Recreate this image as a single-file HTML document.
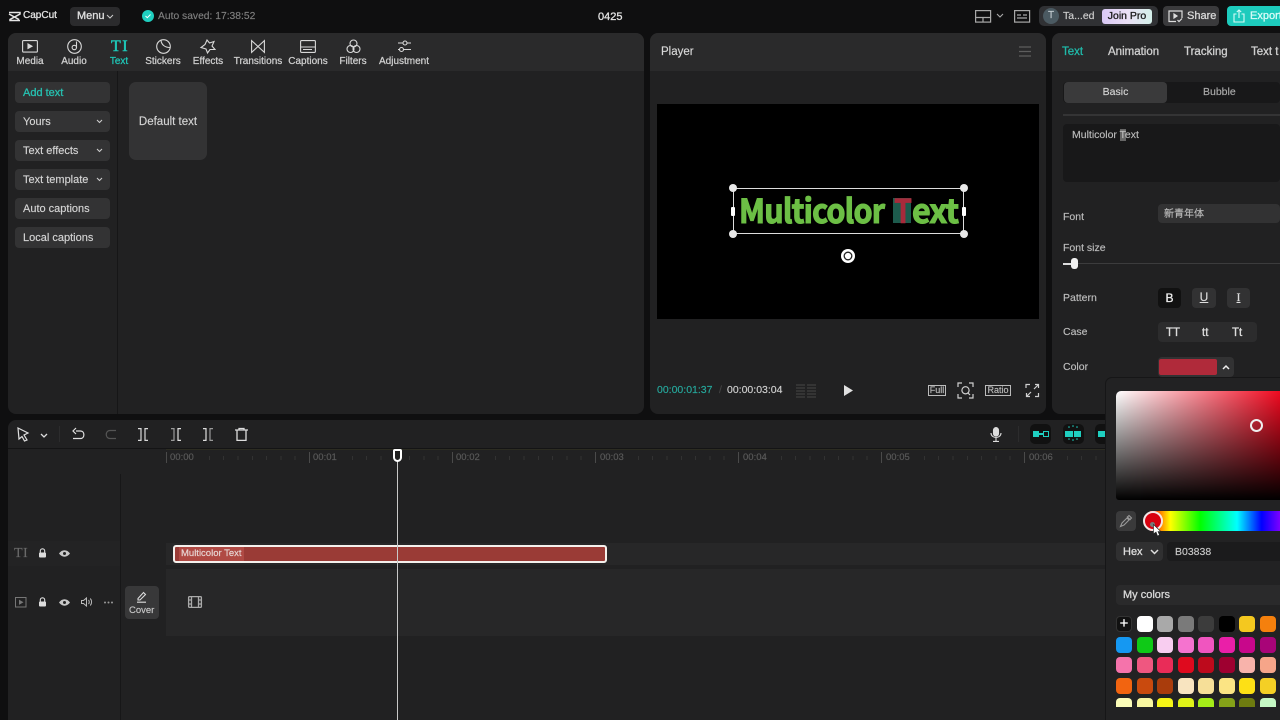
<!DOCTYPE html>
<html><head><meta charset="utf-8"><style>
*{box-sizing:border-box;margin:0;padding:0}
html,body{width:1280px;height:720px;overflow:hidden;background:#0f0f10}
#w{position:absolute;left:0;top:0;width:1280px;height:720px;overflow:hidden;background:#0f0f10;font-family:"Liberation Sans","Noto Sans CJK SC",sans-serif;color:#ddd;filter:blur(.3px);-webkit-text-stroke:.15px currentColor}
.a{position:absolute}
.t{position:absolute;white-space:nowrap;font-size:11px;line-height:14px;color:#d8d8d8}
.panel{position:absolute;background:#212122;border-radius:8px;overflow:hidden}
.tab{position:absolute;top:56px;width:80px;text-align:center;font-size:10px;line-height:12px;color:#cfcfcf;white-space:nowrap;-webkit-text-stroke:.25px currentColor}
.btn{position:absolute;left:15px;width:95px;height:21px;background:#333334;border-radius:4px;font-size:11px;line-height:21px;padding:1px 0 0 8px;color:#d4d4d4}
.m{-webkit-text-stroke:.3px currentColor}
.h{position:absolute;white-space:nowrap;top:189px;font:bold 33px/40px 'Noto Sans CJK SC','Liberation Sans',sans-serif;letter-spacing:-.9px;transform-origin:0 0}
svg{position:absolute;overflow:visible}
.sw{position:absolute;width:16px;height:16px;border-radius:4px}
</style></head><body><div id="w">

<!-- top bar -->
<svg style="left:8px;top:11px" width="13" height="11" viewBox="0 0 13 11" fill="none" stroke="#e5e5e5" stroke-width="1.500"><path d="M1 1.500H12V3L2 8.500V9.500H12M1 3L11 8.500"/></svg>
<div class="t m" style="left:23px;top:9px;font-size:10px;color:#e2e2e2">CapCut</div>
<div class="a" style="left:70px;top:7px;width:50px;height:19px;background:#2b2b2d;border-radius:4px"></div>
<div class="t m" style="left:77px;top:9px;font-size:11px;color:#e0e0e0">Menu</div>
<svg style="left:106px;top:14px" width="8" height="5" fill="none" stroke="#ccc" stroke-width="1"><path d="M1 1L4 4L7 1"/></svg>
<svg style="left:142px;top:10px" width="12" height="12"><circle cx="6" cy="6" r="6" fill="#1fcfc0"/><path d="M3.500 6L5.300 7.700L8.500 4.500" stroke="#fff" fill="none"/></svg>
<div class="t" style="left:158px;top:10px;font-size:10.300px;color:#7f7f7f">Auto saved: 17:38:52</div>
<div class="t m" style="left:598px;top:10px;font-size:11px;color:#e2e2e2">0425</div>
<svg style="left:975px;top:10px" width="17" height="13" fill="none" stroke="#a8a8a8" stroke-width="1.200"><rect x=".6" y=".6" width="15" height="11.500"/><path d="M.6 7.500H15.600M8 7.500V12"/></svg>
<svg style="left:996px;top:13px" width="8" height="5" fill="none" stroke="#aaa" stroke-width="1.100"><path d="M1 1L4 4L7 1"/></svg>
<svg style="left:1014px;top:10px" width="16" height="13" fill="none" stroke="#a8a8a8" stroke-width="1.200"><rect x=".6" y=".6" width="15" height="11.500"/><path d="M3 5H7M9 5H13M3 8H13"/></svg>
<div class="a" style="left:1039px;top:6px;width:119px;height:20px;background:#303134;border-radius:5px"></div>
<div class="a" style="left:1043px;top:8px;width:16px;height:16px;background:#4b5a62;border-radius:50%;font-size:10px;line-height:16px;text-align:center;color:#c8d0d4">T</div>
<div class="t" style="left:1063px;top:9px;font-size:10.500px;color:#cfcfcf">Ta...ed</div>
<div class="a m" style="left:1102px;top:9px;width:50px;height:15px;border-radius:3px;background:linear-gradient(90deg,#d9c8f5,#eadff5,#d5f0ea);font-size:10.500px;line-height:15px;text-align:center;color:#1a1a1a">Join Pro</div>
<div class="a" style="left:1163px;top:6px;width:56px;height:20px;background:#3a3a3c;border-radius:4px"></div>
<svg style="left:1168px;top:10px" width="15" height="13" fill="none" stroke="#ddd" stroke-width="1.200"><path d="M8 11.500H1V1H14V8"/><path d="M6 4L9 6L6 8Z" fill="#ddd"/><path d="M9.500 10L11 11.500L14 8.500"/></svg>
<div class="t m" style="left:1187px;top:9px;font-size:11px;color:#d8d8d8">Share</div>
<div class="a" style="left:1227px;top:6px;width:60px;height:20px;background:#1dcbbd;border-radius:4px"></div>
<svg style="left:1233px;top:9px" width="12" height="14" fill="none" stroke="#d8fbf7" stroke-width="1.100"><path d="M3.500 5H1V13H11V5H8.500M6 9V1M3.800 3L6 1L8.200 3"/></svg>
<div class="t m" style="left:1250px;top:9px;font-size:11px;color:#d8fbf7">Export</div>

<!-- left panel -->
<div class="panel" style="left:8px;top:33px;width:636px;height:381px;">
  <div class="a" style="left:0;top:0;width:636px;height:38px;background:#2a2a2b"></div>
  <div class="a" style="left:109px;top:38px;width:1px;height:343px;background:#161617"></div>
</div>
<svg style="left:22px;top:40px" width="16" height="13" fill="none" stroke="#d8d8d8" stroke-width="1.100"><rect x=".6" y=".6" width="14.800" height="11.500" rx="1"/><path d="M6 4L10 6.300L6 8.500Z" fill="#d8d8d8"/></svg>
<svg style="left:67px;top:39px" width="15" height="15" fill="none" stroke="#d8d8d8" stroke-width="1.100"><circle cx="7.500" cy="7.500" r="6.800"/><circle cx="7.300" cy="8.500" r="2.200"/><path d="M9.500 8.500V2.500"/></svg>
<div class="t" style="left:111px;top:38px;font:16px/17px 'Liberation Serif',serif;color:#1fc8b8;letter-spacing:1.500px;-webkit-text-stroke:.5px #1fc8b8">TI</div>
<svg style="left:156px;top:39px" width="15" height="15" fill="none" stroke="#d8d8d8" stroke-width="1.100"><circle cx="7.500" cy="7.500" r="6.800"/><path d="M5 1.500C5.500 5.500 8.500 8.500 14 8.500"/></svg>
<svg style="left:200px;top:39px" width="16" height="15" fill="none" stroke="#d8d8d8" stroke-width="1.100"><path d="M7 1L9.500 4L14 2.500L12 7L15 10.500L10 10.500L7.500 14L6 10L1 8.500L5 5.500Z"/></svg>
<svg style="left:251px;top:40px" width="14" height="13" fill="none" stroke="#d8d8d8" stroke-width="1.100"><path d="M.6 .6L7 6.500L13.400 .6V12.400L7 6.500L.6 12.400Z"/></svg>
<svg style="left:300px;top:40px" width="16" height="13" fill="none" stroke="#d8d8d8" stroke-width="1.100"><rect x=".6" y=".6" width="14.800" height="11.800" rx="1"/><path d="M.6 7H15.400M3 9.500H12" /></svg>
<svg style="left:346px;top:39px" width="15" height="15" fill="none" stroke="#d8d8d8" stroke-width="1.100"><circle cx="7.500" cy="4.500" r="3.500"/><circle cx="4.500" cy="10" r="3.500"/><circle cx="10.500" cy="10" r="3.500"/></svg>
<svg style="left:397px;top:39px" width="15" height="14" fill="none" stroke="#d8d8d8" stroke-width="1.100"><path d="M1 4H6M10 4H14M1 10.500H2.500M6.500 10.500H14"/><circle cx="8" cy="4" r="2"/><circle cx="4.500" cy="10.500" r="2"/></svg>
<div class="tab" style="left:-10px">Media</div>
<div class="tab" style="left:34px">Audio</div>
<div class="tab" style="left:79px;color:#1fc8b8">Text</div>
<div class="tab" style="left:123px">Stickers</div>
<div class="tab" style="left:168px">Effects</div>
<div class="tab" style="left:218px">Transitions</div>
<div class="tab" style="left:268px">Captions</div>
<div class="tab" style="left:313px">Filters</div>
<div class="tab" style="left:364px">Adjustment</div>

<div class="btn m" style="top:82px;color:#26c0b0">Add text</div>
<div class="btn" style="top:111px">Yours</div>
<div class="btn" style="top:140px">Text effects</div>
<div class="btn" style="top:169px">Text template</div>
<div class="btn" style="top:198px">Auto captions</div>
<div class="btn" style="top:227px">Local captions</div>
<svg style="left:96px;top:119px" width="7" height="5" fill="none" stroke="#ccc" stroke-width="1.100"><path d="M1 1L3.500 3.500L6 1"/></svg>
<svg style="left:96px;top:148px" width="7" height="5" fill="none" stroke="#ccc" stroke-width="1.100"><path d="M1 1L3.500 3.500L6 1"/></svg>
<svg style="left:96px;top:177px" width="7" height="5" fill="none" stroke="#ccc" stroke-width="1.100"><path d="M1 1L3.500 3.500L6 1"/></svg>
<div class="a" style="left:129px;top:82px;width:78px;height:78px;background:#333334;border-radius:7px;font-size:11.500px;line-height:78px;padding-top:1px;text-align:center;color:#d4d4d4">Default text</div>

<!-- player -->
<div class="panel" style="left:650px;top:33px;width:396px;height:381px;">
  <div class="a" style="left:0;top:0;width:396px;height:38px;background:#2a2a2b"></div>
</div>
<div class="t" style="left:661px;top:45px;font-size:11.500px;color:#d8d8d8">Player</div>
<svg style="left:1019px;top:46px" width="12" height="11" stroke="#5e5e5e" stroke-width="1.200"><path d="M0 1H12M0 5.500H12M0 10H12"/></svg>
<div class="a" style="left:657px;top:104px;width:382px;height:215px;background:#000"></div>
<div class="a" style="left:733px;top:188px;width:231px;height:46px;border:1px solid #ddd"></div>
<div class="a" style="left:893px;top:198px;width:18px;height:25px;background:#1d5b4d"></div>
<div class="h" style="left:739px;color:#6cbf45;transform:scaleX(.925);-webkit-text-stroke:1.100px #6cbf45">Multicolor</div>
<div class="h" style="left:894px;color:#a82a3b;transform:scaleX(.88);-webkit-text-stroke:.5px #a82a3b">T</div>
<div class="h" style="left:912px;color:#6cbf45;transform:scaleX(.975);-webkit-text-stroke:1.100px #6cbf45">ext</div>
<div class="a" style="left:729px;top:184px;width:8px;height:8px;background:#e8e8e8;border-radius:50%"></div>
<div class="a" style="left:960px;top:184px;width:8px;height:8px;background:#e8e8e8;border-radius:50%"></div>
<div class="a" style="left:729px;top:230px;width:8px;height:8px;background:#e8e8e8;border-radius:50%"></div>
<div class="a" style="left:960px;top:230px;width:8px;height:8px;background:#e8e8e8;border-radius:50%"></div>
<div class="a" style="left:731px;top:207px;width:4px;height:9px;background:#fff;border-radius:1px"></div>
<div class="a" style="left:962px;top:207px;width:4px;height:9px;background:#fff;border-radius:1px"></div>
<svg style="left:841px;top:249px" width="14" height="14"><circle cx="7" cy="7" r="7" fill="#fff"/><circle cx="7" cy="7" r="3.800" fill="none" stroke="#222" stroke-width="1.300"/><circle cx="7" cy="7" r="1.800" fill="#fff"/></svg>
<div class="t" style="left:657px;top:383px;font-size:10.500px;color:#26a89c">00:00:01:37</div>
<div class="t" style="left:719px;top:383px;font-size:10.500px;color:#444">/</div>
<div class="t" style="left:727px;top:383px;font-size:10.500px;color:#cfcfcf">00:00:03:04</div>
<svg style="left:796px;top:384px" width="20" height="14" stroke="#3a3a3a" stroke-width="1.500"><path d="M0 1H9M11 1H20M0 4H9M11 4H20M0 7H9M11 7H20M0 10H9M11 10H20M0 13H9M11 13H20"/></svg>
<svg style="left:844px;top:385px" width="9" height="11"><path d="M0 0L9 5.500L0 11Z" fill="#e0e0e0"/></svg>
<div class="a" style="left:928px;top:385px;width:18px;height:11px;border:1px solid #bbb;font-size:9px;line-height:9px;text-align:center;color:#bbb">Full</div>
<svg style="left:958px;top:383px" width="15" height="15" fill="none" stroke="#d0d0d0" stroke-width="1.200"><path d="M0 4V0H4M11 0H15V4M15 11V15H11M4 15H0V11"/><circle cx="7.500" cy="7.300" r="3.600"/><path d="M10 10L12 12"/></svg>
<div class="a" style="left:985px;top:385px;width:26px;height:11px;border:1px solid #bbb;font-size:9px;line-height:9px;text-align:center;color:#bbb">Ratio</div>
<svg style="left:1026px;top:384px" width="13" height="13" fill="none" stroke="#d0d0d0" stroke-width="1.200"><path d="M0 4V0.500H4M9 0.500H12.500V4M12.500 9V12.500H9M4 12.500H0.500V9M12 1L8 5M1 12L5 8"/></svg>

<!-- right panel -->
<div class="panel" style="left:1052px;top:33px;width:240px;height:381px;">
  <div class="a" style="left:0;top:0;width:240px;height:38px;background:#2a2a2b"></div>
</div>
<div class="t m" style="left:1062px;top:45px;font-size:11.500px;color:#20b8a8">Text</div>
<div class="t m" style="left:1108px;top:45px;font-size:11.500px;color:#cfcfcf">Animation</div>
<div class="t m" style="left:1184px;top:45px;font-size:11.500px;color:#cfcfcf">Tracking</div>
<div class="t m" style="left:1251px;top:45px;font-size:11.500px;color:#cfcfcf">Text t</div>
<div class="a" style="left:1063px;top:82px;width:217px;height:21px;background:#181819;border-radius:4px"></div>
<div class="a" style="left:1064px;top:82px;width:103px;height:21px;background:#3a3a3b;border-radius:4px;font-size:10.500px;line-height:20px;text-align:center;color:#d4d4d4">Basic</div>
<div class="t" style="left:1203px;top:85px;font-size:10.500px;color:#aaa">Bubble</div>
<div class="a" style="left:1063px;top:114px;width:217px;height:2px;background:#343435"></div>
<div class="a" style="left:1063px;top:124px;width:217px;height:58px;background:#181819;border-radius:4px"></div>
<div class="a" style="left:1120px;top:129px;width:6px;height:12px;background:#666"></div>
<div class="t" style="left:1072px;top:128px;font-size:10.500px;color:#bcbcbc">Multicolor Text</div>
<div class="t" style="left:1063px;top:210px;font-size:10.500px;color:#bdbdbd">Font</div>
<div class="a" style="left:1158px;top:204px;width:122px;height:19px;background:#323233;border-radius:4px"></div>
<div class="t" style="left:1164px;top:208px;font-size:10px;color:#bbb">新青年体</div>
<div class="t" style="left:1063px;top:241px;font-size:10.500px;color:#bdbdbd">Font size</div>
<div class="a" style="left:1063px;top:263px;width:217px;height:1px;background:#3c3c3d"></div>
<div class="a" style="left:1063px;top:263px;width:10px;height:2px;background:#ddd"></div>
<div class="a" style="left:1071px;top:258px;width:7px;height:11px;background:#f0f0f0;border-radius:3px"></div>
<div class="t" style="left:1063px;top:291px;font-size:10.500px;color:#bdbdbd">Pattern</div>
<div class="a m" style="left:1158px;top:288px;width:23px;height:20px;background:#111;border-radius:4px;font-size:12px;line-height:20px;text-align:center;color:#eee">B</div>
<div class="a" style="left:1192px;top:288px;width:24px;height:20px;background:#323233;border-radius:4px;font-size:12px;line-height:19px;text-align:center;color:#ddd;text-decoration:underline">U</div>
<div class="a" style="left:1227px;top:288px;width:23px;height:20px;background:#323233;border-radius:4px;font:12px/19px 'Liberation Serif',serif;text-align:center;color:#ddd;text-decoration:underline">I</div>
<div class="t" style="left:1063px;top:325px;font-size:10.500px;color:#bdbdbd">Case</div>
<div class="a" style="left:1158px;top:322px;width:99px;height:20px;background:#2c2c2d;border-radius:4px"></div>
<div class="t m" style="left:1166px;top:326px;font-size:11.500px;color:#ddd">TT</div>
<div class="t m" style="left:1202px;top:326px;font-size:11.500px;color:#ddd">tt</div>
<div class="t m" style="left:1232px;top:326px;font-size:11.500px;color:#ddd">Tt</div>
<div class="t" style="left:1063px;top:360px;font-size:10.500px;color:#bdbdbd">Color</div>
<div class="a" style="left:1158px;top:357px;width:76px;height:20px;background:#323233;border-radius:4px"></div>
<div class="a" style="left:1159px;top:359px;width:58px;height:16px;background:#b02a3a;border-radius:2px"></div>
<svg style="left:1222px;top:365px" width="8" height="5" fill="none" stroke="#eee" stroke-width="1.500"><path d="M1 4L4 1L7 4"/></svg>

<!-- timeline -->
<div class="a" style="left:8px;top:420px;width:1100px;height:300px;background:#212122;border-radius:8px 0 0 0"></div>
<div class="a" style="left:8px;top:448px;width:1100px;height:1px;background:#141415"></div>
<svg style="left:17px;top:427px" width="12" height="15" fill="none" stroke="#e0e0e0" stroke-width="1.200"><path d="M1 1L11 6L7 8L10 13L7.500 14L5 9.500L2 12Z"/></svg>
<svg style="left:40px;top:433px" width="8" height="5" fill="none" stroke="#ddd" stroke-width="1.300"><path d="M1 1L4 4L7 1"/></svg>
<div class="a" style="left:59px;top:426px;width:1px;height:16px;background:#2c2c2d"></div>
<svg style="left:72px;top:428px" width="13" height="12" fill="none" stroke="#e0e0e0" stroke-width="1.200"><path d="M4 3.500H8.500C13 3.500 13 11 8.500 11H1M4 .5L1 3.500L4 6.500" transform="translate(0,-.5)"/></svg>
<svg style="left:105px;top:428px" width="12" height="12" fill="none" stroke="#555" stroke-width="1.200"><path d="M11 2.500H5C0 2.500 0 10.500 5 10.500H11"/></svg>
<svg style="left:138px;top:428px" width="11" height="13" fill="none" stroke="#d8d8d8" stroke-width="1.200"><path d="M0 .6H3V12.400H0M10 .6H7V12.400H10"/></svg>
<svg style="left:171px;top:428px" width="11" height="13" fill="none" stroke="#999" stroke-width="1.200"><path d="M0 .6H3V12.400H0"/><path d="M10 .6H7V12.400H10" stroke="#ddd"/></svg>
<svg style="left:203px;top:428px" width="11" height="13" fill="none" stroke="#ddd" stroke-width="1.200"><path d="M0 .6H3V12.400H0"/><path d="M10 .6H7V12.400H10" stroke="#999"/></svg>
<svg style="left:235px;top:428px" width="13" height="13" fill="none" stroke="#ddd" stroke-width="1.300"><path d="M0 2H13M2 2V12.400H11V2M4 2V.5H9V2"/></svg>

<svg style="left:990px;top:427px" width="12" height="15" fill="none" stroke="#ddd" stroke-width="1.100"><rect x="3.500" y=".6" width="5" height="8.500" rx="2.500" fill="#ddd"/><path d="M1 6C1 12 11 12 11 6M6 11V14M3 14.400H9"/></svg>
<div class="a" style="left:1018px;top:426px;width:1px;height:16px;background:#2c2c2d"></div>
<div class="a" style="left:1030px;top:424px;width:21px;height:20px;background:#111;border-radius:5px"></div>
<div class="a" style="left:1033px;top:431px;width:6px;height:6px;background:#1fcfc0"></div>
<div class="a" style="left:1039px;top:433px;width:4px;height:2px;background:#1fcfc0"></div>
<div class="a" style="left:1043px;top:431px;width:6px;height:6px;border:1.500px solid #1fcfc0"></div>
<div class="a" style="left:1063px;top:424px;width:21px;height:20px;background:#111;border-radius:5px"></div>
<div class="a" style="left:1065px;top:431px;width:7.500px;height:6px;background:#1fcfc0"></div>
<div class="a" style="left:1073.500px;top:431px;width:7.500px;height:6px;background:#1fcfc0"></div>
<svg style="left:1065px;top:426px" width="17" height="16" fill="#1fcfc0"><circle cx="4" cy="1" r=".8"/><circle cx="8" cy="0" r=".8"/><circle cx="12" cy="1" r=".8"/><circle cx="4" cy="13" r=".8"/><circle cx="8" cy="14" r=".8"/><circle cx="12" cy="13" r=".8"/></svg>
<div class="a" style="left:1095px;top:424px;width:13px;height:20px;background:#111;border-radius:5px 0 0 5px"></div>
<div class="a" style="left:1098px;top:431px;width:8px;height:6px;background:#1fcfc0"></div>
<div class="a" style="left:1106px;top:420px;width:6px;height:300px;background:#171718"></div>

<!-- ruler -->
<div class="a" style="left:166px;top:449px;width:940px;height:1px;background:#2c2c22"></div>
<div class="a" style="left:166px;top:456px;width:940px;height:4px;background:repeating-linear-gradient(90deg,#323232 0,#323232 1px,transparent 1px,transparent 14.300px)"></div>
<div class="a" style="left:166px;top:452px;width:1px;height:11px;background:#4a4a4a"></div><div class="a" style="left:167px;top:451px;width:30px;height:13px;background:#212122"></div><div class="t" style="left:170px;top:451px;font-size:9.500px;color:#5a5a5a">00:00</div>
<div class="a" style="left:309px;top:452px;width:1px;height:11px;background:#4a4a4a"></div><div class="a" style="left:310px;top:451px;width:30px;height:13px;background:#212122"></div><div class="t" style="left:313px;top:451px;font-size:9.500px;color:#5a5a5a">00:01</div>
<div class="a" style="left:452px;top:452px;width:1px;height:11px;background:#4a4a4a"></div><div class="a" style="left:453px;top:451px;width:30px;height:13px;background:#212122"></div><div class="t" style="left:456px;top:451px;font-size:9.500px;color:#5a5a5a">00:02</div>
<div class="a" style="left:595px;top:452px;width:1px;height:11px;background:#4a4a4a"></div><div class="a" style="left:596px;top:451px;width:30px;height:13px;background:#212122"></div><div class="t" style="left:600px;top:451px;font-size:9.500px;color:#5a5a5a">00:03</div>
<div class="a" style="left:738px;top:452px;width:1px;height:11px;background:#4a4a4a"></div><div class="a" style="left:739px;top:451px;width:30px;height:13px;background:#212122"></div><div class="t" style="left:743px;top:451px;font-size:9.500px;color:#5a5a5a">00:04</div>
<div class="a" style="left:881px;top:452px;width:1px;height:11px;background:#4a4a4a"></div><div class="a" style="left:882px;top:451px;width:30px;height:13px;background:#212122"></div><div class="t" style="left:886px;top:451px;font-size:9.500px;color:#5a5a5a">00:05</div>
<div class="a" style="left:1024px;top:452px;width:1px;height:11px;background:#4a4a4a"></div><div class="a" style="left:1025px;top:451px;width:30px;height:13px;background:#212122"></div><div class="t" style="left:1029px;top:451px;font-size:9.500px;color:#5a5a5a">00:06</div>

<div class="a" style="left:120px;top:474px;width:1px;height:246px;background:#171718"></div>
<div class="a" style="left:166px;top:543px;width:940px;height:22px;background:#272728"></div>
<div class="a" style="left:166px;top:569px;width:940px;height:67px;background:#272728"></div>
<div class="a" style="left:8px;top:541px;width:112px;height:25px;background:#232324"></div>

<div class="t" style="left:14px;top:546px;font:14px/15px 'Liberation Serif',serif;color:#6a6a6a;letter-spacing:.5px">TI</div>
<svg style="left:38px;top:548px" width="9" height="10"><path d="M2.300 4.500V3A2.200 2.200 0 0 1 6.700 3V4.500" stroke="#ddd" stroke-width="1.100" fill="none"/><rect x="1" y="4.500" width="7" height="5" rx="1" fill="#ddd"/></svg>
<svg style="left:59px;top:550px" width="11" height="7"><path d="M0 3.500C3 -.8 8 -.8 11 3.500C8 7.800 3 7.800 0 3.500Z" fill="#c8c8c8"/><circle cx="5.500" cy="3.500" r="1.500" fill="#222"/></svg>
<svg style="left:15px;top:597px" width="12" height="11" fill="none" stroke="#777" stroke-width="1"><rect x=".5" y=".5" width="10.500" height="9.500"/><path d="M4.500 3.500L7.500 5.250L4.500 7Z" fill="#777"/></svg>
<svg style="left:38px;top:597px" width="9" height="10"><path d="M2.300 4.500V3A2.200 2.200 0 0 1 6.700 3V4.500" stroke="#ddd" stroke-width="1.100" fill="none"/><rect x="1" y="4.500" width="7" height="5" rx="1" fill="#ddd"/></svg>
<svg style="left:59px;top:599px" width="11" height="7"><path d="M0 3.500C3 -.8 8 -.8 11 3.500C8 7.800 3 7.800 0 3.500Z" fill="#c8c8c8"/><circle cx="5.500" cy="3.500" r="1.500" fill="#222"/></svg>
<svg style="left:81px;top:597px" width="11" height="10" fill="none" stroke="#bbb" stroke-width="1"><path d="M.5 3.500H2.500L5.500 1V9L2.500 6.500H.5ZM7.500 3C8.500 4 8.500 6 7.500 7M9.300 1.500C11 3.500 11 6.500 9.300 8.500"/></svg>
<svg style="left:104px;top:601px" width="9" height="3" fill="#999"><circle cx="1" cy="1.500" r="1"/><circle cx="4.500" cy="1.500" r="1"/><circle cx="8" cy="1.500" r="1"/></svg>
<div class="a" style="left:125px;top:586px;width:34px;height:33px;background:#383839;border-radius:4px"></div>
<svg style="left:136px;top:591px" width="11" height="12" fill="none" stroke="#ddd" stroke-width="1.100"><path d="M2 7.500L7.500 1.500L9.500 3.500L4 9H2ZM1 11.200H10"/></svg>
<div class="t" style="left:129px;top:604px;font-size:9.500px;color:#c8c8c8">Cover</div>
<svg style="left:188px;top:596px" width="14" height="12" fill="none" stroke="#aaa" stroke-width="1.300"><rect x=".6" y=".6" width="12.800" height="10.800" rx="1"/><path d="M3.500 .6V11.400M10.500 .6V11.400M.6 4H3.500M.6 8H3.500M10.500 4H13.400M10.500 8H13.400"/></svg>

<div class="a" style="left:173px;top:545px;width:434px;height:18px;background:#9a3b36;border:2px solid #f4f0ec;border-radius:3px"></div>
<div class="a" style="left:179px;top:547px;width:65px;height:14px;background:#b04a44"></div>
<div class="t" style="left:181px;top:547px;font-size:9.500px;color:#e8d8d6">Multicolor Text</div>

<div class="a" style="left:397px;top:456px;width:1px;height:264px;background:#c8c8c8"></div>
<div class="a" style="left:393px;top:449px;width:9px;height:13px;border:2px solid #fff;border-radius:2px 2px 5px 5px;background:#222"></div>

<!-- color picker -->
<div class="a" style="left:1106px;top:378px;width:180px;height:350px;background:#222223;border-radius:6px;box-shadow:0 0 0 1px #161617"></div>
<div class="a" style="left:1116px;top:391px;width:164px;height:109px;border-radius:5px 0 0 3px;background:linear-gradient(to bottom,transparent,#000),linear-gradient(to right,#fff,#f00a20)"></div>
<div class="a" style="left:1250px;top:419px;width:13px;height:13px;border:2px solid #eee;border-radius:50%"></div>
<div class="a" style="left:1116px;top:511px;width:20px;height:20px;background:#3a3a3b;border-radius:4px"></div>
<svg style="left:1119px;top:514px" width="14" height="14" fill="none" stroke="#999" stroke-width="1.100"><path d="M1.500 12.500L3 9L8 4L10 6L5 11ZM8 2.500L11.500 6M10 1.500L12.500 4L11 5.500L8.500 3Z"/></svg>
<div class="a" style="left:1150px;top:511px;width:136px;height:20px;background:linear-gradient(90deg,#f00 0%,#ff0 15%,#0f0 37%,#0ff 64%,#00f 82%,#8000ff 96%,#a0f 100%)"></div>
<div class="a" style="left:1143px;top:511px;width:20px;height:20px;background:#d8000f;border:2px solid #f3e6e6;border-radius:50%"></div>
<div class="a" style="left:1150px;top:522px;width:5px;height:5px;background:#777;border-radius:50%"></div>
<svg style="left:1153px;top:524px" width="8" height="13"><path d="M.5 .5V10L3 8L4.500 12L6.500 11L5 7.500H7.800Z" fill="#fff" stroke="#222" stroke-width=".6"/></svg>
<div class="a" style="left:1116px;top:542px;width:47px;height:19px;background:#303031;border-radius:4px"></div>
<div class="t m" style="left:1123px;top:545px;font-size:11px;color:#ddd">Hex</div>
<svg style="left:1150px;top:549px" width="9" height="6" fill="none" stroke="#ddd" stroke-width="1.500"><path d="M1 1L4.500 4.500L8 1"/></svg>
<div class="a" style="left:1167px;top:542px;width:119px;height:19px;background:#1b1b1c;border-radius:4px"></div>
<div class="t" style="left:1175px;top:545px;font-size:10.500px;color:#c8c8c8">B03838</div>
<div class="a" style="left:1116px;top:585px;width:170px;height:20px;background:#2a2a2b;border-radius:4px"></div>
<div class="t m" style="left:1123px;top:588px;font-size:11px;color:#d8d8d8">My colors</div>

<div class="sw" style="left:1116px;top:616px;background:#111;border:1px solid #333;color:#fff;font-size:15px;line-height:13px;text-align:center">+</div>
<div class="sw" style="left:1137px;top:616px;background:#fff"></div>
<div class="sw" style="left:1157px;top:616px;background:#a9a9a9"></div>
<div class="sw" style="left:1178px;top:616px;background:#7a7a7a"></div>
<div class="sw" style="left:1198px;top:616px;background:#3c3c3c"></div>
<div class="sw" style="left:1219px;top:616px;background:#000"></div>
<div class="sw" style="left:1239px;top:616px;background:#f4c81f"></div>
<div class="sw" style="left:1260px;top:616px;background:#f5800d"></div>

<div class="sw" style="left:1116px;top:637px;background:#1598f2"></div>
<div class="sw" style="left:1137px;top:637px;background:#0fc917"></div>
<div class="sw" style="left:1157px;top:637px;background:#f8cdf0"></div>
<div class="sw" style="left:1178px;top:637px;background:#f573cf"></div>
<div class="sw" style="left:1198px;top:637px;background:#f055bf"></div>
<div class="sw" style="left:1219px;top:637px;background:#ea1fa8"></div>
<div class="sw" style="left:1239px;top:637px;background:#c8078b"></div>
<div class="sw" style="left:1260px;top:637px;background:#a80478"></div>

<div class="sw" style="left:1116px;top:657px;background:#f573ab"></div>
<div class="sw" style="left:1137px;top:657px;background:#ef5780"></div>
<div class="sw" style="left:1157px;top:657px;background:#e92c58"></div>
<div class="sw" style="left:1178px;top:657px;background:#df0a1e"></div>
<div class="sw" style="left:1198px;top:657px;background:#bd0a1c"></div>
<div class="sw" style="left:1219px;top:657px;background:#9e0030"></div>
<div class="sw" style="left:1239px;top:657px;background:#f8b3ab"></div>
<div class="sw" style="left:1260px;top:657px;background:#f6a589"></div>

<div class="sw" style="left:1116px;top:678px;background:#f26410"></div>
<div class="sw" style="left:1137px;top:678px;background:#c94a0e"></div>
<div class="sw" style="left:1157px;top:678px;background:#a93c0c"></div>
<div class="sw" style="left:1178px;top:678px;background:#f8e4c0"></div>
<div class="sw" style="left:1198px;top:678px;background:#f6df98"></div>
<div class="sw" style="left:1219px;top:678px;background:#fbe484"></div>
<div class="sw" style="left:1239px;top:678px;background:#fde015"></div>
<div class="sw" style="left:1260px;top:678px;background:#f4cf25"></div>

<div class="a" style="left:1110px;top:698px;width:170px;height:9px;overflow:hidden">
<div class="sw" style="left:6px;top:0;background:#fbfcb8"></div>
<div class="sw" style="left:27px;top:0;background:#f8f6a0"></div>
<div class="sw" style="left:47px;top:0;background:#f5f516"></div>
<div class="sw" style="left:68px;top:0;background:#dff218"></div>
<div class="sw" style="left:88px;top:0;background:#a5ec18"></div>
<div class="sw" style="left:109px;top:0;background:#84a118"></div>
<div class="sw" style="left:129px;top:0;background:#6e7c10"></div>
<div class="sw" style="left:150px;top:0;background:#c5f8c4"></div>
</div>
</div></body></html>
